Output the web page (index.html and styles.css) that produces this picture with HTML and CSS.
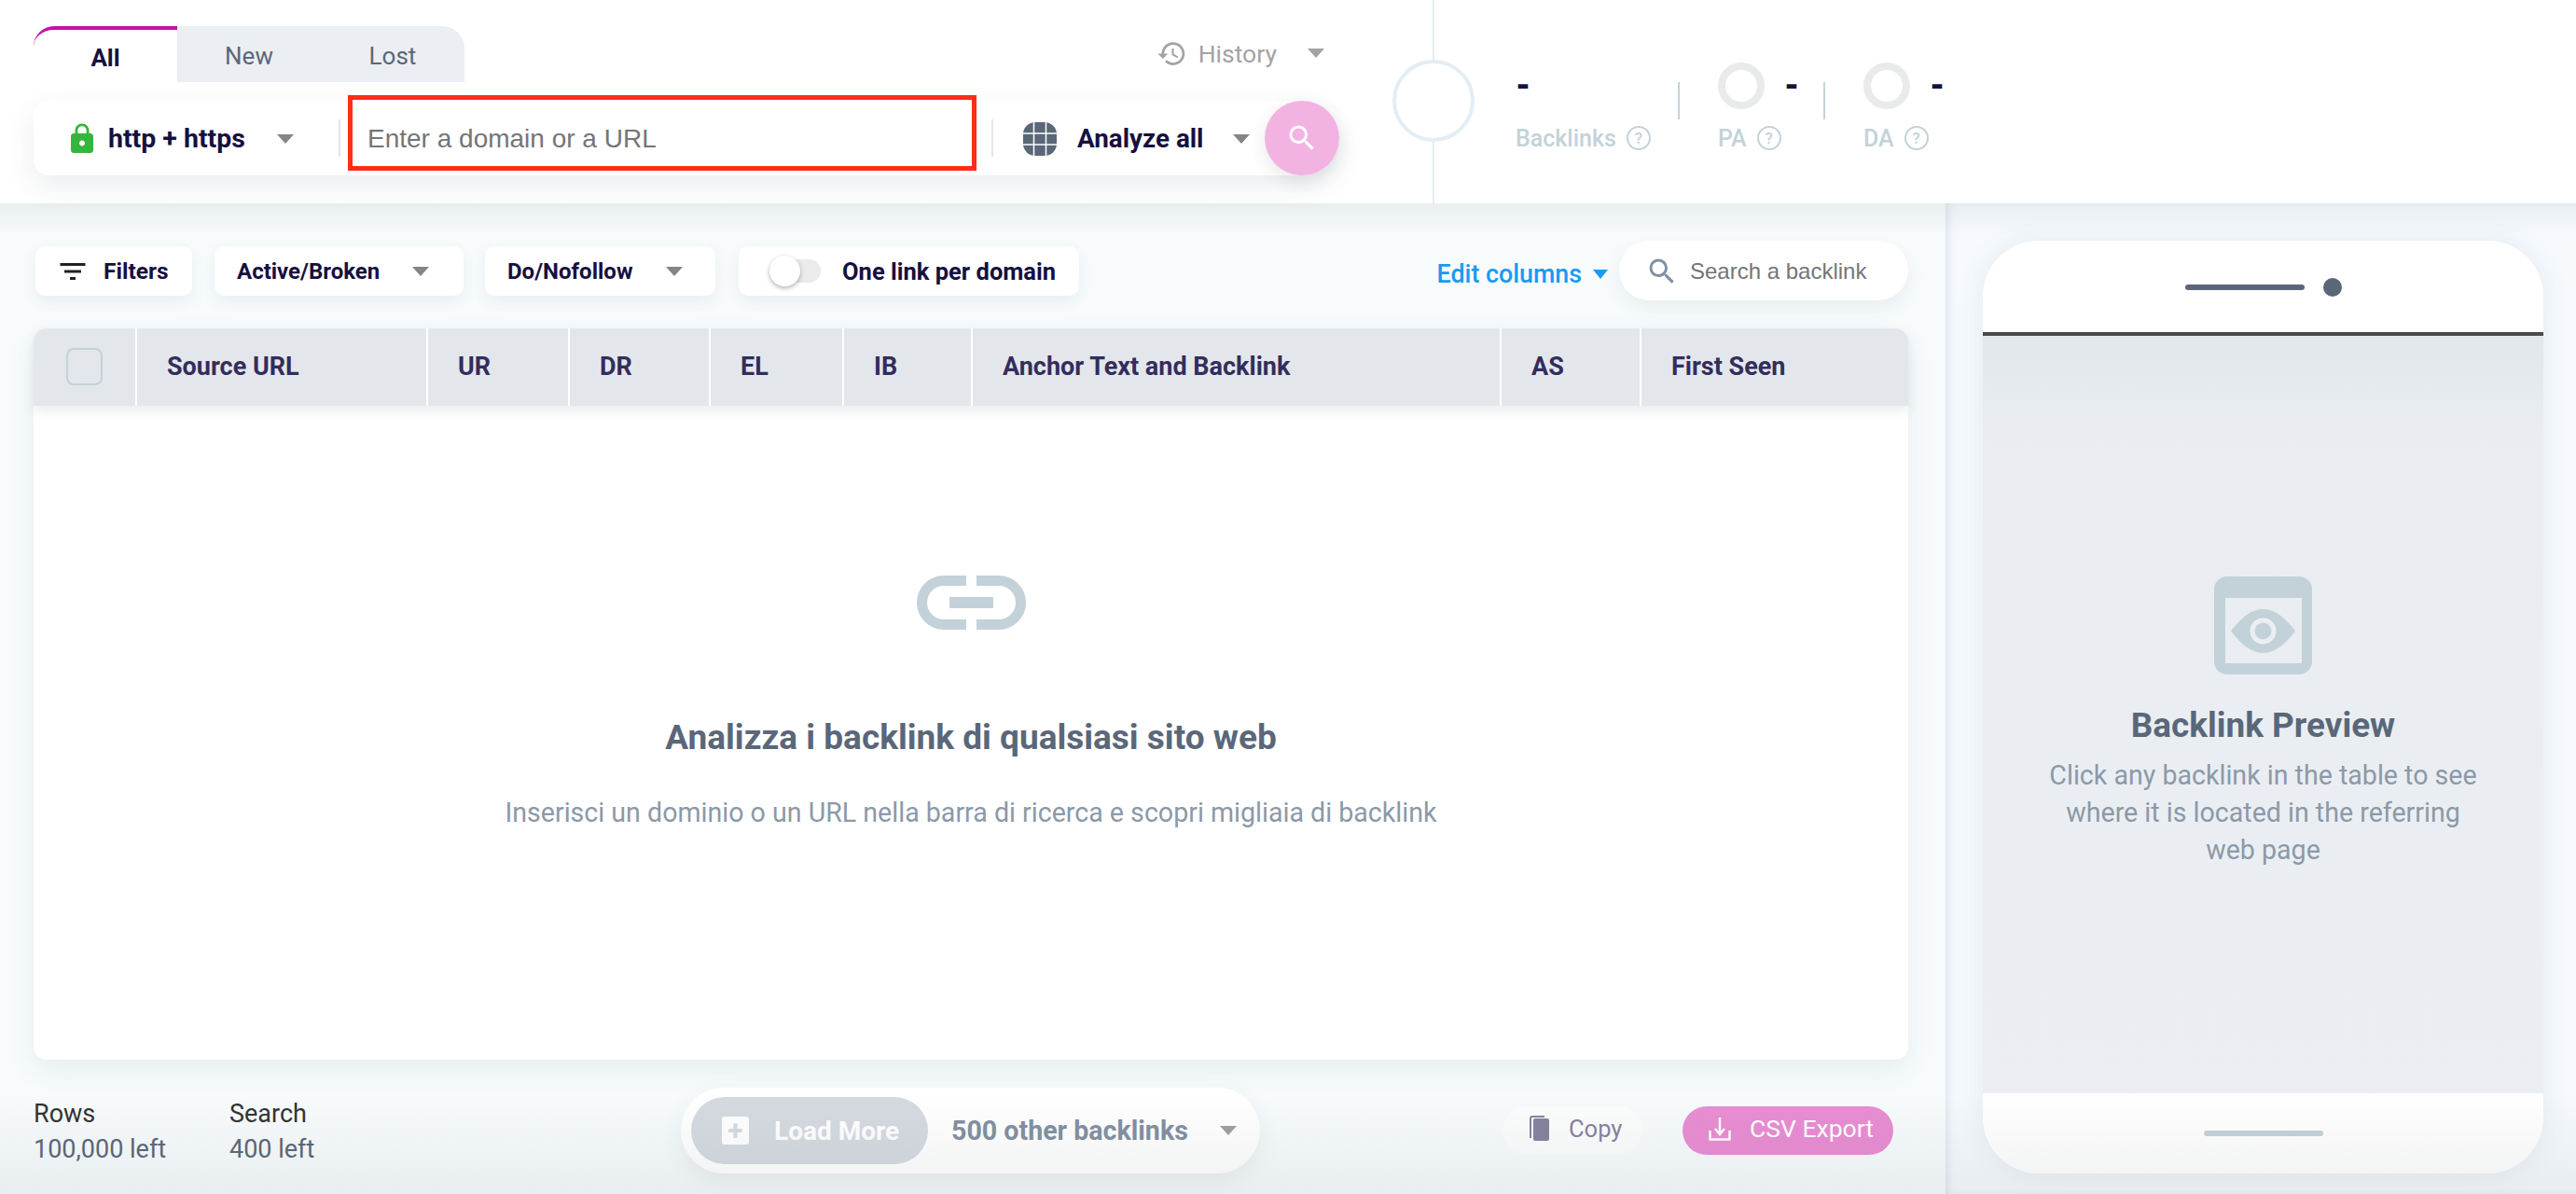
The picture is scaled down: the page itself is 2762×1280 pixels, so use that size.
FILE: index.html
```html
<!DOCTYPE html>
<html lang="en">
<head>
    <meta charset="UTF-8">
    <title>Backlink Checker</title>
    <link rel="stylesheet" href="styles.css">
</head>
<body>

    <!-- Top bar -->
    <header class="top-bar">
        <div class="search-area">
            <div class="tabs-row">
                <div class="tabs">
                    <div class="tab tab-active">All</div>
                    <div class="tab">New</div>
                    <div class="tab tab-last">Lost</div>
                </div>
                <div class="history">
                    <svg class="history-icon" viewBox="0 0 24 24"><path d="M13 3c-4.97 0-9 4.03-9 9H1l3.89 3.89.07.14L9 12H6c0-3.87 3.13-7 7-7s7 3.13 7 7-3.13 7-7 7c-1.93 0-3.68-.79-4.94-2.06l-1.42 1.42C8.27 19.99 10.51 21 13 21c4.97 0 9-4.03 9-9s-4.03-9-9-9zm-1 5v5l4.28 2.54.72-1.21-3.5-2.08V8H12z"/></svg>
                    <span>History</span>
                    <i class="caret history-caret"></i>
                </div>
            </div>
            <div class="search-bar">
                <div class="bar-segment protocol">
                    <svg class="lock-icon" viewBox="0 0 24 24"><path d="M18 8h-1V6c0-2.76-2.24-5-5-5S7 3.24 7 6v2H6c-1.1 0-2 .9-2 2v10c0 1.1.9 2 2 2h12c1.1 0 2-.9 2-2V10c0-1.1-.9-2-2-2zm-6 9c-1.1 0-2-.9-2-2s.9-2 2-2 2 .9 2 2-.9 2-2 2zm3.1-9H8.9V6c0-1.71 1.39-3.1 3.1-3.1 1.71 0 3.1 1.39 3.1 3.1v2z"/></svg>
                    <span>http + https</span>
                    <i class="caret"></i>
                </div>
                <div class="bar-divider"></div>
                <div class="bar-segment url-input">Enter a domain or a URL</div>
                <div class="bar-divider"></div>
                <div class="bar-segment analyze">
                    <svg class="globe-icon" viewBox="0 0 36 36">
                        <rect width="36" height="36" rx="13"/>
                        <path d="M11.5 0v36M24.5 0v36M0 12h36M0 24h36"/>
                    </svg>
                    <span>Analyze all</span>
                    <i class="caret"></i>
                </div>
                <button class="search-button">
                    <svg viewBox="0 0 24 24"><path d="M15.5 14h-.79l-.28-.27A6.47 6.47 0 0 0 16 9.5 6.5 6.5 0 1 0 9.5 16c1.61 0 3.09-.59 4.23-1.57l.27.28v.79l5 4.99L20.49 19l-4.99-5zm-6 0C7.01 14 5 11.99 5 9.5S7.01 5 9.5 5 14 7.01 14 9.5 11.99 14 9.5 14z"/></svg>
                </button>
                <div class="url-highlight"></div>
            </div>
            <div class="score-ring"></div>
        </div>

        <div class="stats">
            <div class="stat stat-backlinks">
                <div class="stat-value">-</div>
                <div class="stat-label">Backlinks <span class="help">?</span></div>
            </div>
            <div class="stat-divider"></div>
            <div class="stat stat-small">
                <div class="stat-value"><i class="mini-ring"></i>-</div>
                <div class="stat-label">PA <span class="help">?</span></div>
            </div>
            <div class="stat-divider"></div>
            <div class="stat stat-small">
                <div class="stat-value"><i class="mini-ring"></i>-</div>
                <div class="stat-label">DA <span class="help">?</span></div>
            </div>
        </div>
    </header>

    <div class="content">
        <!-- Backlink table -->
        <main class="main-panel">
            <div class="toolbar">
                <button class="pill-button filters-button">
                    <svg viewBox="0 0 24 24"><path d="M10 18h4v-2h-4v2zM3 6v2h18V6H3zm3 7h12v-2H6v2z"/></svg>
                    Filters
                </button>
                <button class="pill-button select-button select-active">Active/Broken <i class="caret"></i></button>
                <button class="pill-button select-button select-follow">Do/Nofollow <i class="caret"></i></button>
                <button class="pill-button toggle-button">
                    <span class="toggle"><span class="toggle-knob"></span></span>
                    One link per domain
                </button>
                <div class="edit-columns">Edit columns <i class="caret"></i></div>
                <div class="backlink-search">
                    <svg viewBox="0 0 24 24"><path d="M15.5 14h-.79l-.28-.27A6.47 6.47 0 0 0 16 9.5 6.5 6.5 0 1 0 9.5 16c1.61 0 3.09-.59 4.23-1.57l.27.28v.79l5 4.99L20.49 19l-4.99-5zm-6 0C7.01 14 5 11.99 5 9.5S7.01 5 9.5 5 14 7.01 14 9.5 11.99 14 9.5 14z"/></svg>
                    <span>Search a backlink</span>
                </div>
            </div>

            <section class="table-card">
                <div class="table-head">
                    <div class="col col-check"><span class="checkbox"></span></div>
                    <div class="col col-source">Source URL</div>
                    <div class="col col-ur">UR</div>
                    <div class="col col-dr">DR</div>
                    <div class="col col-el">EL</div>
                    <div class="col col-ib">IB</div>
                    <div class="col col-anchor">Anchor Text and Backlink</div>
                    <div class="col col-as">AS</div>
                    <div class="col col-seen">First Seen</div>
                </div>
                <div class="empty-state">
                    <svg class="link-icon" viewBox="0 0 117 58">
                        <path class="link-stroke" d="M53 5.500H29a23.500 23.500 0 0 0 0 47H53M64 5.500H88a23.500 23.500 0 0 1 0 47H64"/>
                        <rect x="35" y="23" width="47" height="12"/>
                    </svg>
                    <h2>Analizza i backlink di qualsiasi sito web</h2>
                    <p>Inserisci un dominio o un URL nella barra di ricerca e scopri migliaia di backlink</p>
                </div>
            </section>

            <div class="table-footer">
                <div class="quota quota-rows">
                    <strong>Rows</strong>
                    <span>100,000 left</span>
                </div>
                <div class="quota">
                    <strong>Search</strong>
                    <span>400 left</span>
                </div>
                <div class="load-more">
                    <button class="load-button"><i class="plus-box">+</i>Load More</button>
                    <span class="load-count">500 other backlinks</span>
                    <i class="caret"></i>
                </div>
                <button class="copy-button">
                    <svg viewBox="0 0 21 27"><rect x="4" y="3" width="17" height="24" rx="2"/><path class="copy-back" d="M1 24V3a2 2 0 0 1 2-2h13"/></svg>
                    Copy
                </button>
                <button class="export-button">
                    <svg viewBox="0 0 24 26"><path d="M12 1v17M7 13l5 6 5-6M1.500 15v9.500h21V15"/></svg>
                    CSV Export
                </button>
            </div>
        </main>

        <!-- Phone preview -->
        <aside class="preview-panel">
            <div class="phone">
                <div class="phone-top">
                    <span class="speaker"></span>
                    <span class="camera"></span>
                </div>
                <div class="phone-screen">
                    <svg class="eye-icon" viewBox="0 0 105 105">
                        <path fill-rule="evenodd" d="M14 0h77a14 14 0 0 1 14 14v77a14 14 0 0 1-14 14H14a14 14 0 0 1-14-14V14A14 14 0 0 1 14 0zM12 23v70h82V23z"/>
                        <path d="M18 58.500Q52.500 11.500 87 58.500 52.500 105.500 18 58.500z"/>
                        <circle class="eye-ring" cx="52.500" cy="58.500" r="14"/>
                        <circle cx="52.500" cy="58.500" r="9"/>
                    </svg>
                    <h3>Backlink Preview</h3>
                    <p>Click any backlink in the table to see where it is located in the referring web page</p>
                </div>
                <div class="phone-bottom"><span class="home-bar"></span></div>
            </div>
        </aside>
    </div>

    <div class="page-fade"></div>

</body>
</html>
```

FILE: styles.css
```css
/* --- General Setup --- */
:root {
    --navy: #16103f;
    --slate: #5a6779;
    --muted: #8c99a8;
    --ice: #c3d2d9;
}

* {
    box-sizing: border-box;
}

html, body {
    margin: 0;
    height: 1280px;
    overflow: hidden;
}

body {
    position: relative;
    font-family: 'Roboto', sans-serif;
    color: var(--navy);
    background-color: #f7fbfc;
}

button {
    font-family: inherit;
    border: none;
    padding: 0;
    cursor: pointer;
}

.caret {
    display: inline-block;
    width: 0;
    height: 0;
    border-left: 9px solid transparent;
    border-right: 9px solid transparent;
    border-top: 10px solid #858585;
}

/* --- Top Bar --- */
.top-bar {
    display: flex;
    height: 218px;
    background-color: #fff;
}

.search-area {
    position: relative;
    width: 1538px;
    padding: 28px 0 0 36px;
    border-right: 2px solid #e3edf4;
}

.tabs-row {
    display: flex;
    height: 80px;
}

.tabs {
    display: flex;
    height: 60px;
}

.tab {
    width: 154px;
    height: 60px;
    line-height: 64px;
    text-align: center;
    font-size: 26px;
    color: var(--slate);
    background-color: #ebeef2;
}

.tab-active {
    font-weight: 700;
    color: var(--navy);
    background-color: #fff;
    border-top: 4px solid #c80eaa;
    border-top-left-radius: 22px;
    line-height: 60px;
}

.tab-last {
    border-top-right-radius: 24px;
}

.history {
    display: flex;
    align-items: center;
    height: 32px;
    margin: 13px 0 0 auto;
    padding-right: 116px;
    font-size: 26.5px;
    color: #a3a3a3;
}

.history-icon {
    width: 33px;
    height: 33px;
    margin-right: 12px;
    fill: #a3a3a3;
}

.history-caret {
    margin-left: 33px;
    border-top-color: #a3a3a3;
}

.search-bar {
    position: relative;
    display: flex;
    align-items: center;
    width: 1400px;
    height: 80px;
    background-color: #fff;
    border-radius: 16px 40px 40px 16px;
    box-shadow: 0 12px 30px rgba(60, 80, 100, 0.1);
}

.bar-segment {
    display: flex;
    align-items: center;
    height: 100%;
    padding-top: 1px;
    font-size: 28.5px;
    font-weight: 700;
}

.bar-divider {
    width: 2px;
    height: 40px;
    background-color: #e6e6e6;
}

.protocol {
    width: 327px;
    padding-left: 34px;
}

.lock-icon {
    width: 36px;
    height: 36px;
    margin-right: 10px;
    fill: #36b53c;
}

.protocol .caret {
    margin-left: 34px;
}

.url-input {
    width: 698px;
    padding-left: 29px;
    font-family: 'Liberation Sans', sans-serif;
    font-size: 28px;
    font-weight: 400;
    color: #757575;
}

.analyze {
    width: 291px;
    padding-left: 32px;
    font-size: 27.8px;
}

.globe-icon {
    width: 36px;
    height: 36px;
    margin-right: 22px;
}

.globe-icon rect {
    fill: var(--slate);
}

.globe-icon path {
    stroke: #fff;
    stroke-width: 1.5;
    fill: none;
}

.analyze .caret {
    margin-left: 32px;
}

.search-button {
    display: flex;
    align-items: center;
    justify-content: center;
    width: 80px;
    height: 80px;
    border-radius: 50%;
    background-color: #f2b3e3;
    box-shadow: 0 6px 18px rgba(60, 60, 80, 0.12);
}

.search-button svg {
    width: 36px;
    height: 36px;
    fill: #fff;
}

/* red annotation over the url field */
.url-highlight {
    position: absolute;
    left: 337px;
    top: -6px;
    width: 674px;
    height: 81px;
    border: 5px solid #ff2d16;
}

.score-ring {
    position: absolute;
    right: -45px;
    top: 64px;
    width: 88px;
    height: 88px;
    border: 4px solid #e3edf4;
    border-radius: 50%;
    background-color: #fff;
}

/* --- Stats --- */
.stats {
    display: flex;
    align-items: flex-start;
    padding: 67px 0 0 87px;
}

.stat-backlinks {
    width: 174px;
}

.stat-small {
    width: 114px;
    margin-left: 41px;
    margin-right: -1px;
}

.stat-value {
    display: flex;
    align-items: center;
    height: 50px;
    font-size: 36px;
    font-weight: 900;
    line-height: 50px;
}

.stat-label {
    display: flex;
    align-items: center;
    height: 30px;
    margin-top: 16px;
    font-size: 25px;
    font-weight: 500;
    color: var(--ice);
}

.help {
    display: inline-block;
    width: 26px;
    height: 26px;
    margin-left: 11px;
    border: 2px solid var(--ice);
    border-radius: 50%;
    font-size: 17px;
    line-height: 22px;
    text-align: center;
}

.stat-divider {
    width: 2px;
    height: 40px;
    margin-top: 21px;
    background-color: var(--ice);
}

.mini-ring {
    width: 50px;
    height: 50px;
    margin-right: 21px;
    border: 8px solid #e8eaec;
    border-radius: 50%;
}

/* --- Main Layout --- */
.content {
    position: relative;
    display: flex;
    height: 1062px;
}

/* shadow of the top bar */
.content::before {
    content: "";
    position: absolute;
    left: 0;
    right: 0;
    top: 0;
    height: 34px;
    background: linear-gradient(rgba(60, 70, 90, 0.07), rgba(60, 70, 90, 0));
    pointer-events: none;
}

.main-panel {
    width: 2086px;
    padding: 40px 40px 0 36px;
}

.toolbar {
    display: flex;
    align-items: center;
    height: 64px;
    padding-left: 2px;
}

.pill-button {
    display: flex;
    align-items: center;
    height: 53px;
    padding-top: 1px;
    background-color: #fff;
    border-radius: 10px;
    font-size: 24px;
    font-weight: 700;
    color: var(--navy);
    box-shadow: 0 6px 16px rgba(60, 80, 100, 0.08);
}

.filters-button {
    width: 168px;
    padding-left: 22px;
    font-size: 24.5px;
}

.filters-button svg {
    width: 36px;
    height: 36px;
    margin-right: 15px;
    fill: #222;
}

.select-button {
    padding-left: 24px;
    margin-left: 24px;
}

.select-button .caret {
    margin-left: 35px;
}

.select-active {
    width: 267px;
}

.select-follow {
    width: 247px;
    margin-left: 23px;
}

.toggle-button {
    width: 365px;
    margin-left: 25px;
    padding-left: 33px;
    font-size: 25.5px;
}

.toggle {
    position: relative;
    display: inline-block;
    width: 55px;
    height: 25px;
    margin-right: 23px;
    background-color: #ebebeb;
    border-radius: 13px;
}

.toggle-knob {
    position: absolute;
    left: 0;
    top: -4px;
    width: 33px;
    height: 33px;
    background-color: #fff;
    border-radius: 50%;
    box-shadow: 0 2px 5px rgba(0, 0, 0, 0.3);
}

.edit-columns {
    display: flex;
    align-items: center;
    margin-left: auto;
    margin-top: 7px;
    font-size: 26.8px;
    font-weight: 500;
    color: #1a9af0;
}

.edit-columns .caret {
    margin-left: 12px;
    border-left-width: 8px;
    border-right-width: 8px;
    border-top-color: #1a9af0;
}

.backlink-search {
    display: flex;
    align-items: center;
    width: 310px;
    height: 64px;
    margin-left: 12px;
    padding: 2px 0 0 28px;
    background-color: #fff;
    border-radius: 32px;
    font-family: 'Liberation Sans', sans-serif;
    font-size: 24px;
    color: #757575;
    box-shadow: 0 8px 20px rgba(60, 80, 100, 0.08);
}

.backlink-search svg {
    width: 36px;
    height: 36px;
    margin-right: 12px;
    fill: #8090a5;
}

/* --- Table --- */
.table-card {
    display: flex;
    flex-direction: column;
    height: 784px;
    margin-top: 30px;
    background-color: #fff;
    border-radius: 14px;
    box-shadow: 0 12px 30px rgba(60, 80, 100, 0.08);
}

.table-head {
    display: flex;
    height: 83px;
    background-color: #e3e7ec;
    border-radius: 14px 14px 0 0;
    box-shadow: 0 6px 12px rgba(60, 80, 100, 0.1);
}

.col {
    display: flex;
    align-items: center;
    padding: 0 0 2px 32px;
    border-right: 2px solid #fff;
    font-size: 27px;
    font-weight: 700;
    color: #332d5c;
}

.col-check { width: 111px; padding-left: 35px; }
.col-source { width: 312px; }
.col-ur { width: 152px; }
.col-dr { width: 151px; }
.col-el { width: 143px; }
.col-ib { width: 138px; }
.col-anchor { width: 567px; }
.col-as { width: 150px; }
.col-seen { flex: 1; border-right: none; }

.checkbox {
    width: 39px;
    height: 40px;
    border: 2px solid var(--ice);
    border-radius: 8px;
}

.empty-state {
    flex: 1;
    padding-top: 182px;
    text-align: center;
}

.link-icon {
    display: block;
    width: 117px;
    height: 58px;
    margin: 0 auto;
    fill: var(--ice);
}

.link-stroke {
    fill: none;
    stroke: var(--ice);
    stroke-width: 11;
}

.empty-state h2 {
    margin: 94px 0 0;
    font-size: 37px;
    line-height: 44px;
    font-weight: 700;
    color: var(--slate);
}

.empty-state p {
    margin: 36px 0 0;
    font-size: 28.6px;
    line-height: 44px;
    color: var(--muted);
}

/* --- Table Footer --- */
.table-footer {
    display: flex;
    align-items: center;
    height: 92px;
    margin-top: 30px;
}

.quota {
    display: flex;
    flex-direction: column;
    gap: 8px;
    width: 200px;
    padding-top: 2px;
    font-size: 27px;
    line-height: 30px;
    color: var(--slate);
}

.quota-rows {
    width: 210px;
}

.quota strong {
    font-weight: 400;
    color: #333;
}

.load-more {
    display: flex;
    align-items: center;
    width: 621px;
    height: 92px;
    margin-left: 284px;
    padding-left: 11px;
    background-color: #fff;
    border-radius: 46px;
    box-shadow: 0 8px 24px rgba(60, 80, 100, 0.08);
}

.load-button {
    display: flex;
    align-items: center;
    width: 254px;
    height: 72px;
    padding-left: 33px;
    background-color: #d5dae1;
    border-radius: 36px;
    font-size: 28px;
    font-weight: 700;
    color: #fff;
}

.plus-box {
    width: 29px;
    height: 30px;
    margin-right: 27px;
    background-color: #fff;
    border-radius: 3px;
    font-style: normal;
    font-size: 30px;
    line-height: 30px;
    color: #d5dae1;
}

.load-count {
    margin-left: 25px;
    font-size: 28.6px;
    font-weight: 700;
    color: #8290a1;
}

.load-more .caret {
    margin-left: 34px;
    border-top-color: #a0a0a0;
}

.copy-button {
    display: flex;
    align-items: center;
    width: 150px;
    height: 52px;
    margin-left: auto;
    padding: 0 0 5px 29px;
    background-color: #fcfdfd;
    border-radius: 26px;
    font-size: 25.5px;
    color: #85839f;
}

.copy-button svg {
    width: 21px;
    height: 27px;
    margin-right: 21px;
}

.copy-button rect {
    fill: #85839f;
}

.copy-back {
    fill: none;
    stroke: #85839f;
    stroke-width: 2;
}

.export-button {
    display: flex;
    align-items: center;
    width: 226px;
    height: 52px;
    margin: 0 16px 0 43px;
    padding: 0 0 5px 28px;
    background-color: #e98dd3;
    border-radius: 26px;
    font-size: 26.5px;
    color: #fff;
}

.export-button svg {
    width: 24px;
    height: 26px;
    margin-right: 20px;
    fill: none;
    stroke: #fff;
    stroke-width: 2.500;
}

/* --- Phone Preview --- */
.preview-panel {
    width: 676px;
    padding: 40px 0 0 40px;
    background-color: #f6fafd;
    box-shadow: inset 8px 0 12px -8px rgba(90, 110, 140, 0.25);
}

.phone {
    display: flex;
    flex-direction: column;
    width: 601px;
    height: 1000px;
    border-radius: 60px;
    box-shadow: 0 0 30px rgba(70, 90, 120, 0.1);
}

.phone-top {
    display: flex;
    align-items: center;
    justify-content: center;
    gap: 20px;
    height: 102px;
    padding-top: 2px;
    background-color: #fff;
    border-bottom: 4px solid #4a4a4a;
    border-radius: 60px 60px 0 0;
}

.speaker {
    width: 128px;
    height: 6px;
    background-color: var(--slate);
    border-radius: 3px;
}

.camera {
    width: 20px;
    height: 20px;
    background-color: var(--slate);
    border-radius: 50%;
}

.phone-screen {
    flex: 1;
    padding-top: 258px;
    text-align: center;
    background: linear-gradient(#e2e7ea, #e9edf1 100px, #ebeff3);
}

.eye-icon {
    display: block;
    width: 105px;
    height: 105px;
    margin: 0 auto;
    fill: var(--ice);
}

.eye-icon .eye-ring {
    fill: #ebeff3;
}

.phone-screen h3 {
    margin: 33px 0 0;
    font-size: 36.9px;
    line-height: 44px;
    font-weight: 700;
    color: var(--slate);
}

.phone-screen p {
    width: 480px;
    margin: 11px auto 0;
    font-size: 28.6px;
    line-height: 40px;
    color: var(--muted);
}

.phone-bottom {
    display: flex;
    justify-content: center;
    height: 86px;
    padding-top: 40px;
    background-color: #fff;
    border-radius: 0 0 60px 60px;
}

.home-bar {
    width: 128px;
    height: 6px;
    background-color: var(--ice);
    border-radius: 3px;
}

/* soft shade the app lays over the page edges */
.page-fade {
    position: absolute;
    left: 0;
    right: 0;
    bottom: 0;
    height: 110px;
    background: linear-gradient(rgba(70, 80, 90, 0), rgba(70, 80, 90, 0.08));
    pointer-events: none;
}
```
